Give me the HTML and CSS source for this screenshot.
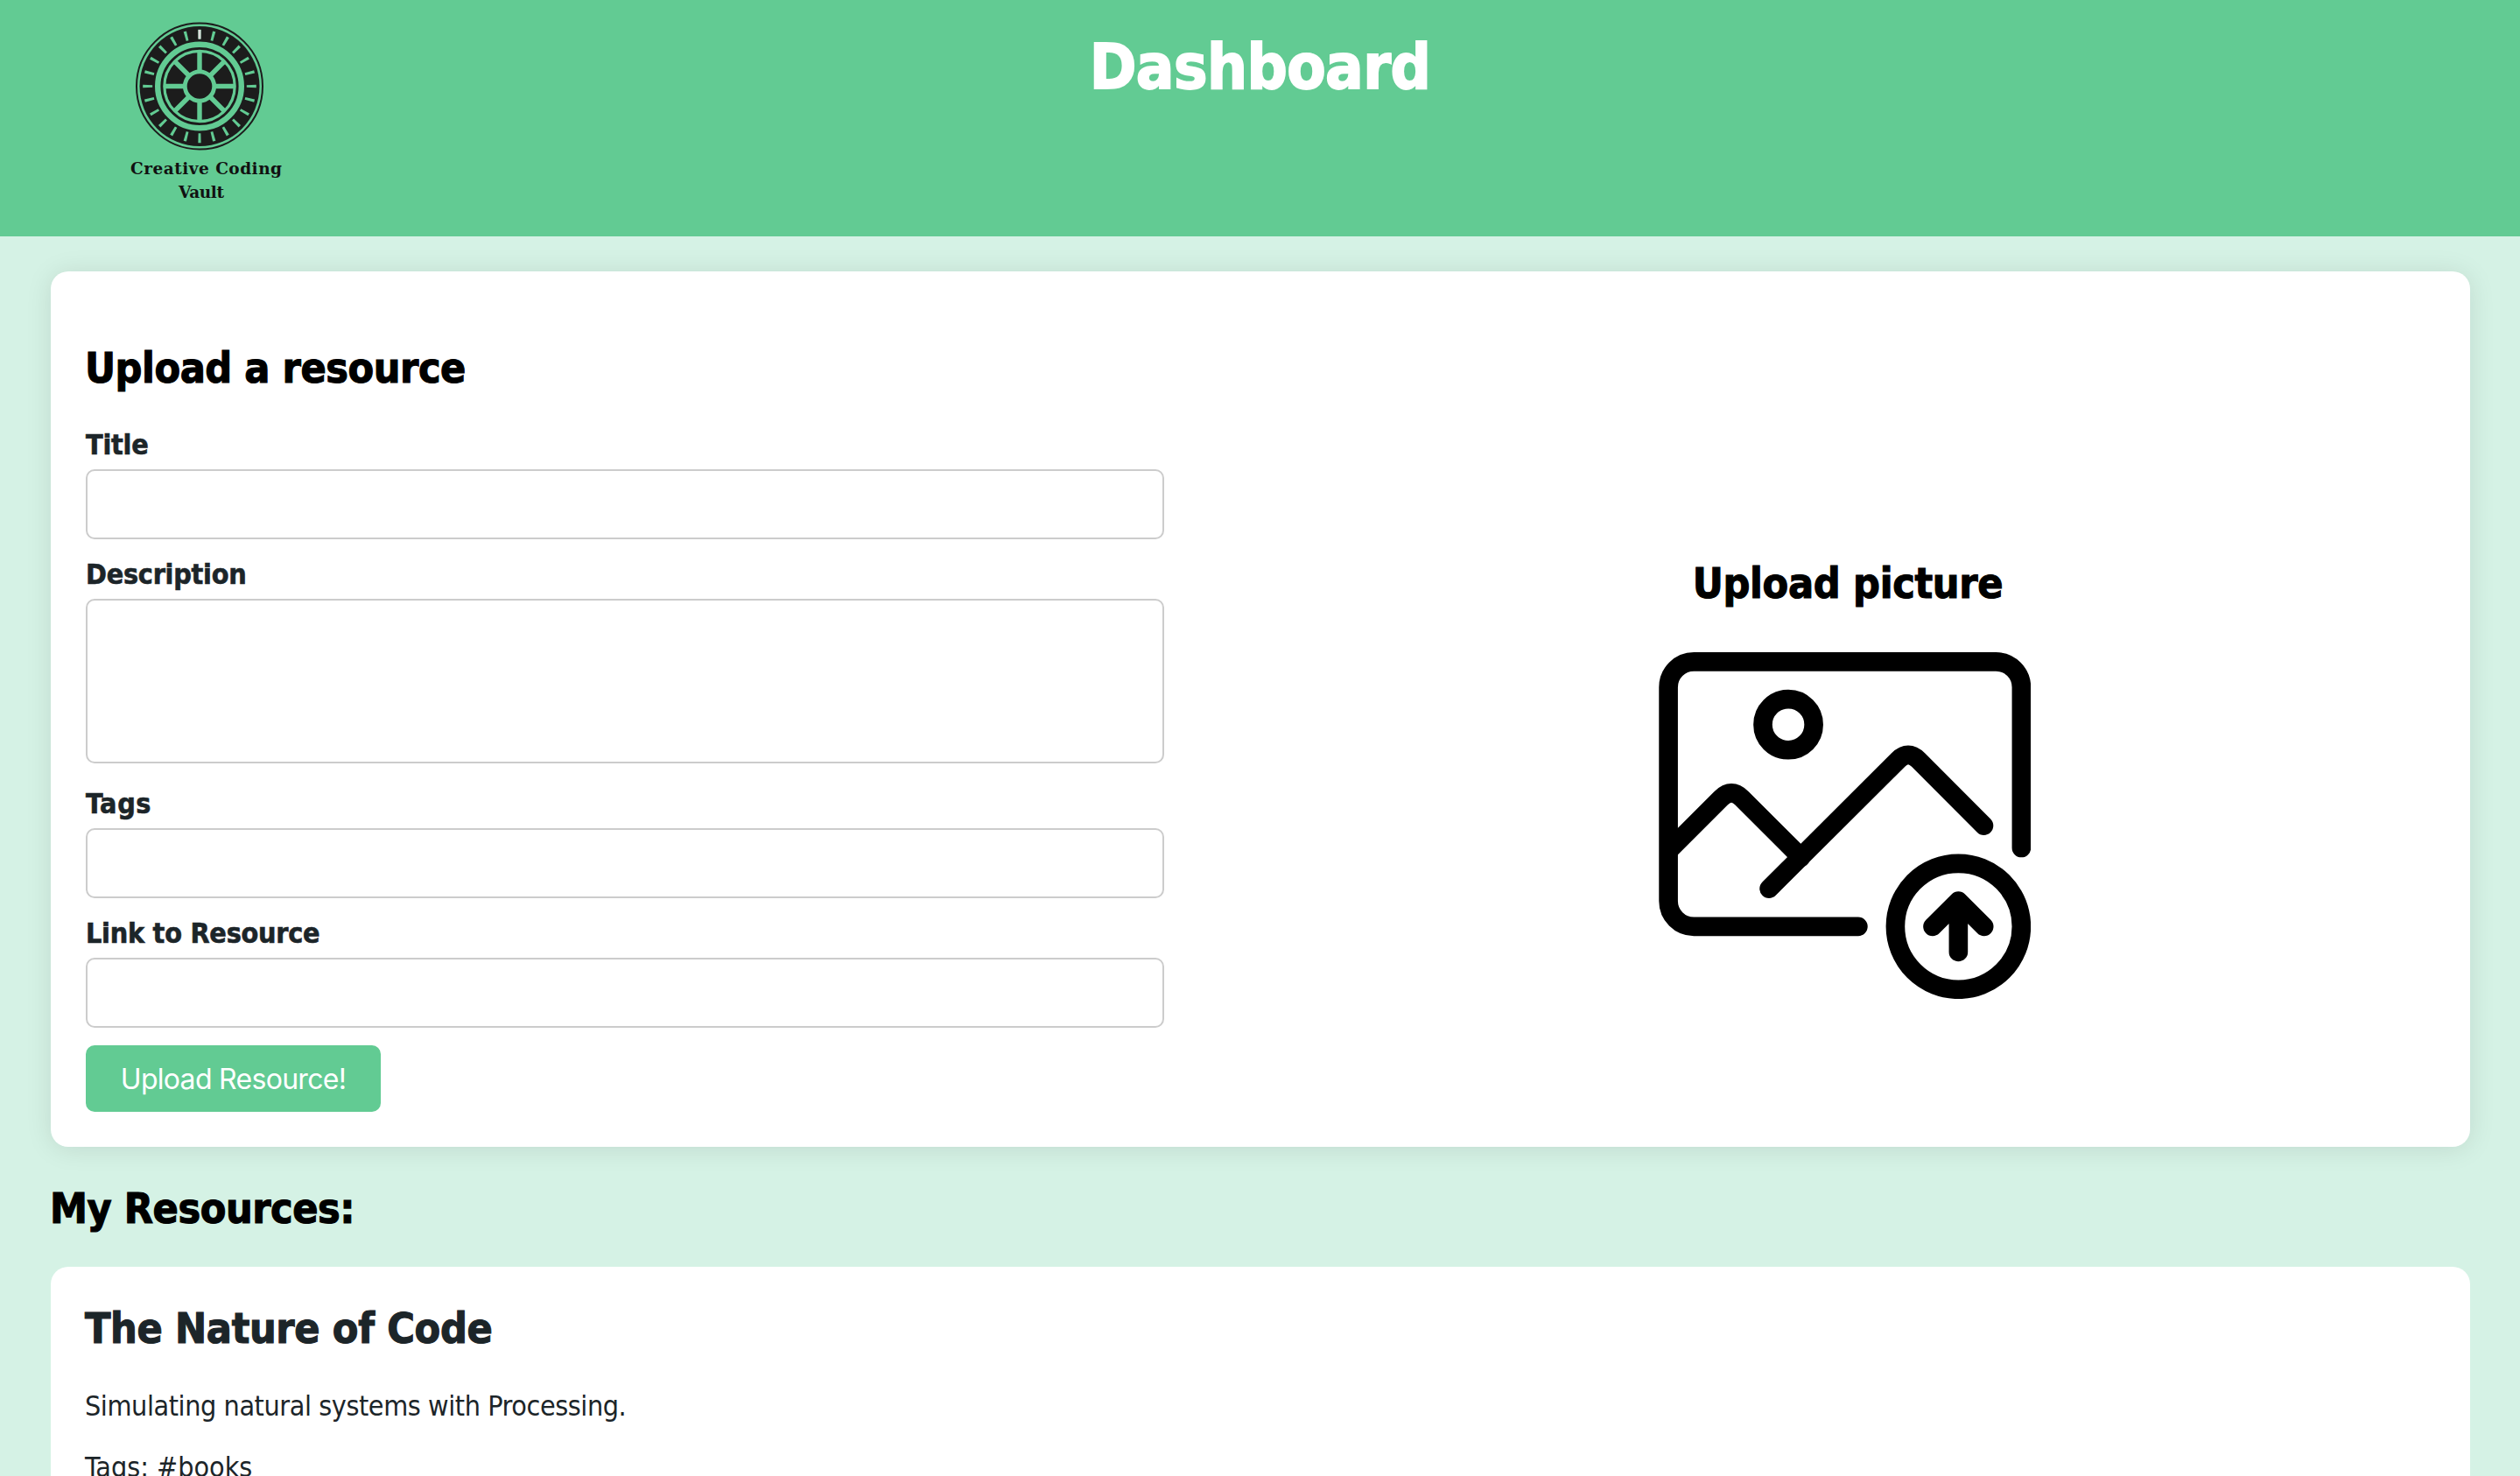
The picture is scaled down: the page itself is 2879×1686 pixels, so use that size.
FILE: index.html
```html
<!DOCTYPE html>
<html lang="en">
<head>
<meta charset="utf-8">
<title>Dashboard</title>
<link rel="stylesheet" href="styles.css">
</head>
<body>
<header class="header">
  <svg class="logo" viewBox="0 0 220 230" role="img" aria-label="Creative Coding Vault">
    <g transform="translate(98 88.5)" fill="none">
      <circle r="72" stroke="#1c1c1c" stroke-width="2"/>
      <circle r="68.5" fill="#1c1c1c"/>
      <circle r="47.8" stroke="#62cb93" stroke-width="6.4"/>
      <circle r="40.2" stroke="#62cb93" stroke-width="3.2"/>
      <circle r="16.7" stroke="#62cb93" stroke-width="4.8"/>
      <path stroke="#62cb93" stroke-width="5.4" d="M0-40V-17M0 40V17M-40 0H-17M40 0H17M-28-28-12-12M28-28 12-12M-28 28-12 12M28 28 12 12"/>
      <circle r="59.3" stroke="#62cb93" stroke-width="11" pathLength="240" stroke-dasharray="2 8" stroke-dashoffset="1"/>
      <path stroke="#dcdcdc" stroke-width="3" d="M0-64.5V-54"/>
    </g>
    <g class="logo-text" text-anchor="middle">
      <text x="105.5" y="189" textLength="173">Creative Coding</text>
      <text x="100" y="215.500" textLength="52">Vault</text>
    </g>
  </svg>
  <h1 class="page-title">Dashboard</h1>
</header>
<main class="content">
  <section class="card upload">
    <form class="form">
      <h2 class="heading form-title">Upload a resource</h2>
      <label class="label" for="title">Title</label>
      <input class="field" id="title" type="text">
      <label class="label" for="description">Description</label>
      <textarea class="field area" id="description"></textarea>
      <label class="label label-tags" for="tags">Tags</label>
      <input class="field" id="tags" type="text">
      <label class="label" for="link">Link to Resource</label>
      <input class="field" id="link" type="text">
      <button class="button" type="button">Upload Resource!</button>
    </form>
    <div class="picture">
      <h2 class="heading pic-title">Upload picture</h2>
      <svg class="pic-icon" viewBox="152 398 1170 1090" fill="none" stroke="#000" stroke-width="59.500" stroke-linecap="round" stroke-linejoin="round">
        <path d="M1292 1013V508a80 80 0 0 0-80-80H262.500a80 80 0 0 0-80 80V1180a80 80 0 0 0 80 80H779"/>
        <circle cx="559.300" cy="625.500" r="80"/>
        <path d="M190 1014.500 347.500 857Q380.500 824 413.500 857L599 1042.500"/>
        <path d="M498.800 1141 904.200 737Q936.200 705 968.200 737L1174 943"/>
        <circle cx="1093.900" cy="1260" r="198"/>
        <path d="M1013 1260 1093.900 1179.500 1174.600 1260M1093.900 1185V1340"/>
      </svg>
    </div>
  </section>
  <h2 class="heading list-title">My Resources:</h2>
  <article class="card resource">
    <h2 class="heading res-title">The Nature of Code</h2>
    <p class="text desc">Simulating natural systems with Processing.</p>
    <p class="text tags">Tags: #books</p>
  </article>
</main>
</body>
</html>
```
FILE: styles.css
```css
* { box-sizing: border-box; margin: 0; padding: 0; }
body {
  height: 1686px;
  overflow: hidden;
  background: #d5f2e5;
  color: #1c2529;
  font-family: "DejaVu Sans Condensed", "DejaVu Sans", sans-serif;
  font-stretch: condensed;
}
.header {
  display: grid;
  grid-template-columns: 1fr auto 1fr;
  align-items: start;
  height: 270px;
  background: #62cb93;
}
.logo { width: 220px; height: 230px; margin: 10px 0 0 130px; }
.logo-text {
  font: bold 18.5px "DejaVu Serif", serif;
  fill: #111;
}
.page-title {
  margin-top: 34px;
  font-size: 72px;
  line-height: 84px;
  letter-spacing: -0.6px;
  color: #fff;
  -webkit-text-stroke: 1.8px;
}
.content { display: flex; flex-direction: column; padding: 40px 57px 0 58px; }
.card { background: #fff; border-radius: 20px; }
.upload {
  display: grid;
  grid-template-columns: 1232px 1fr;
  column-gap: 108px;
  height: 1000px;
  padding: 0 40px;
  box-shadow: 0 2px 30px rgba(0, 0, 0, 0.1);
}
.form { display: flex; flex-direction: column; align-items: flex-start; padding-top: 81px; }
.heading {
  font-size: 48px;
  line-height: 58px;
  letter-spacing: -0.45px;
  color: #000;
  white-space: nowrap;
  -webkit-text-stroke: 1.1px;
}
.form-title { margin: 0 0 39px -1px; }
.label {
  height: 48px;
  font-size: 32px;
  line-height: 40px;
  font-weight: bold;
  letter-spacing: -0.25px;
  white-space: nowrap;
  -webkit-text-stroke: 0.6px;
}
.label-tags { letter-spacing: 0.6px; }
.field {
  width: 1232px;
  height: 80px;
  margin-bottom: 20px;
  border: 2px solid #ccc;
  border-radius: 10px;
  background: #fff;
}
.area { height: 188px; margin-bottom: 26px; resize: none; }
.button {
  width: 337px;
  height: 76px;
  border: 0;
  border-radius: 10px;
  background: #62cb93;
  color: #fff;
  font: 32px/76px Inter, sans-serif;
  letter-spacing: -0.7px;
  padding-top: 1px;
  white-space: nowrap;
}
.picture { display: flex; flex-direction: column; align-items: center; padding-top: 327px; }
.pic-title { margin-left: 2px; letter-spacing: -0.3px; }
.pic-icon { width: 425.3px; height: 396.2px; margin: 49.700px 5px 0 0; }
.list-title { margin: 41px 0 38px -1px; }
.resource { height: 239px; padding: 41px 39px 0; border-radius: 20px 20px 0 0; overflow: hidden; }
.res-title { color: #1c2529; letter-spacing: -0.36px; }
.text { font-size: 32px; line-height: 40px; }
.desc { margin-top: 40px; letter-spacing: -0.42px; }
.tags { margin-top: 30px; }
```
